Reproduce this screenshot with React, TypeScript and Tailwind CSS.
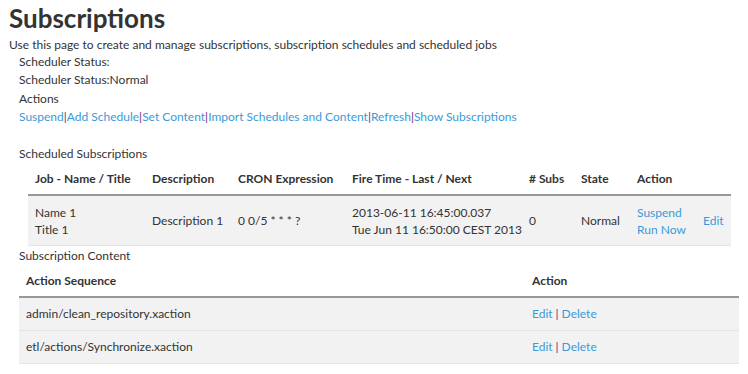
import React from 'react'

const jobCols = 'grid grid-cols-[117px_86px_114px_177px_52px_56px_66px_35px]'
const contentCols = 'grid grid-cols-[506px_214px]'

const actions = ['Suspend', 'Add Schedule', 'Set Content', 'Import Schedules and Content', 'Refresh', 'Show Subscriptions']

const content = ['admin/clean_repository.xaction', 'etl/actions/Synchronize.xaction']

function Link({ children }: { children: React.ReactNode }) {
  return <a href="#" className="text-[#3a9ad9] no-underline">{children}</a>
}

function Sep({ spaced }: { spaced?: boolean }) {
  return <span className={`text-[#6a2a7c] ${spaced ? 'px-[3px]' : ''}`}>|</span>
}

export default function App() {
  return (
    <div className="w-[748px] h-[374px] overflow-hidden bg-white text-[#333] text-[12px] whitespace-nowrap font-['Lato',sans-serif]">
      <h1 className="pl-[9px] h-[36px] leading-[36px] text-[26px] font-bold text-[#333]">Subscriptions</h1>
      <p className="pl-[9px] leading-[17px]">
        Use this page to create and manage subscriptions, subscription schedules and scheduled jobs
      </p>

      <div className="pl-[19px]">
        <div className="leading-[18px]">Scheduler Status:</div>
        <div className="leading-[18px]">Scheduler Status:Normal</div>
        <div className="leading-[18px] mt-[1px]">Actions</div>
        <div className="leading-[18px]">
          {actions.map((a, i) => (
            <React.Fragment key={a}>
              {i > 0 && <Sep />}
              <Link>{a}</Link>
            </React.Fragment>
          ))}
        </div>

        <div className="mt-[19px] leading-[18px]">Scheduled Subscriptions</div>
      </div>

      {/* scheduled jobs table */}
      <div className="ml-[28px] w-[703px]">
        <div className={`${jobCols} h-[33px] items-center font-bold border-b-2 border-[#999]`}>
          <div className="px-[7px]">Job - Name / Title</div>
          <div className="px-[7px]">Description</div>
          <div className="px-[7px]">CRON Expression</div>
          <div className="px-[7px]">Fire Time - Last / Next</div>
          <div className="px-[7px]"># Subs</div>
          <div className="px-[7px]">State</div>
          <div className="px-[7px]">Action</div>
          <div />
        </div>
        <div className={`${jobCols} h-[50px] items-center bg-[#f2f2f2] border-b border-[#e4e4e4] leading-[17px]`}>
          <div className="px-[7px]">
            <div>Name 1</div>
            <div>Title 1</div>
          </div>
          <div className="px-[7px]">Description 1</div>
          <div className="px-[7px]">0 0/5 * * * ?</div>
          <div className="px-[7px]">
            <div>2013-06-11 16:45:00.037</div>
            <div>Tue Jun 11 16:50:00 CEST 2013</div>
          </div>
          <div className="px-[7px]">0</div>
          <div className="px-[7px]">Normal</div>
          <div className="px-[7px]">
            <div><Link>Suspend</Link></div>
            <div><Link>Run Now</Link></div>
          </div>
          <div className="px-[7px]"><Link>Edit</Link></div>
        </div>
      </div>

      <div className="pl-[19px] mt-[1px] leading-[18px]">Subscription Content</div>

      {/* subscription content table */}
      <div className="ml-[19px] w-[720px]">
        <div className={`${contentCols} h-[33px] items-center font-bold border-b-2 border-[#999]`}>
          <div className="px-[7px]">Action Sequence</div>
          <div className="px-[7px]">Action</div>
        </div>
        {content.map((c) => (
          <div key={c} className={`${contentCols} h-[33px] items-center bg-[#f2f2f2] border-b border-[#e4e4e4]`}>
            <div className="px-[7px]">{c}</div>
            <div className="px-[7px]">
              <Link>Edit</Link>
              <Sep spaced />
              <Link>Delete</Link>
            </div>
          </div>
        ))}
      </div>
    </div>
  )
}
